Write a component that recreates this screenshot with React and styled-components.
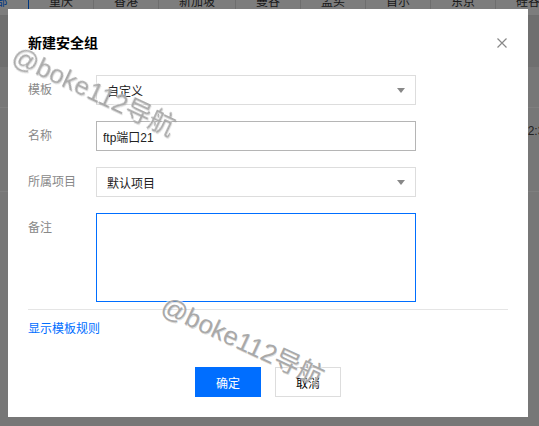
import React from 'react';
import styled, { createGlobalStyle } from 'styled-components';

const GlobalStyle = createGlobalStyle`
  html, body {
    margin: 0;
    padding: 0;
  }

  body {
    width: 539px;
    height: 426px;
    overflow: hidden;
    font-family: "Liberation Sans", "Noto Sans CJK SC", sans-serif;
    font-size: 12px;
    background: #eeeeee;
  }
`;

const Page = styled.div`
  height: 426px;
  overflow: hidden;
  background: #eeeeee;
`;

const RegionTabs = styled.div`
  display: flex;
  height: 26px;
  margin: -10px 0 0 -37px;
  background: #fafafa;
  border-bottom: 1px solid #dddddd;
  box-sizing: border-box;
`;

const RegionTab = styled.div`
  flex-shrink: 0;
  width: ${p => p.$w}px;
  box-sizing: border-box;
  border-right: 1px solid ${p => (p.$active ? '#006eff' : '#dddddd')};
  line-height: 25px;
  text-align: center;
  color: ${p => (p.$active ? '#006eff' : '#333333')};
  white-space: nowrap;
`;

const Toolbar = styled.div`
  height: 51px;
  background: #dedede;
`;

const TableRow = styled.div`
  display: flex;
  height: ${p => p.$h}px;
  border-bottom: 1px solid #ffffff;
`;

const Cell = styled.div`
  flex-shrink: 0;
  width: ${p => p.$w || 120}px;
  padding-top: 14px;
  line-height: 18px;
  color: #444444;
  white-space: nowrap;
`;

const Mask = styled.div`
  position: fixed;
  inset: 0;
  padding: 9px 0 0 8px;
  box-sizing: border-box;
  background: rgba(0, 0, 0, 0.5);
`;

const Dialog = styled.div`
  position: relative;
  display: flex;
  flex-direction: column;
  width: 520px;
  height: 408px;
  padding: 0 20px;
  box-sizing: border-box;
  background: #ffffff;
`;

const Title = styled.h3`
  margin: 0;
  padding-top: 24px;
  font-size: 14px;
  line-height: 21px;
  font-weight: bold;
  color: #000000;
`;

const CloseButton = styled.button`
  position: absolute;
  top: 29px;
  right: 21px;
  width: 10px;
  height: 10px;
  padding: 0;
  border: 0;
  background: none;
  cursor: pointer;

  svg {
    display: block;
  }
`;

const Form = styled.div`
  display: flex;
  flex-direction: column;
  gap: 16px;
  margin-top: 21px;
`;

const FieldRow = styled.div`
  display: flex;
`;

const Label = styled.div`
  width: 68px;
  flex-shrink: 0;
  line-height: 30px;
  color: #888888;
`;

const Select = styled.div`
  display: flex;
  align-items: center;
  justify-content: space-between;
  width: 320px;
  height: 30px;
  padding: 0 10px;
  box-sizing: border-box;
  border: 1px solid #dddddd;
  color: #222222;
  cursor: pointer;
`;

const Caret = styled.span`
  width: 0;
  height: 0;
  border-left: 4px solid transparent;
  border-right: 4px solid transparent;
  border-top: 5px solid #888888;
`;

const TextInput = styled.input`
  width: 320px;
  height: 30px;
  padding: 0 6px;
  box-sizing: border-box;
  border: 1px solid #b5b5b5;
  outline: none;
  font: inherit;
  font-size: 12px;
  color: #222222;
`;

const TextArea = styled.textarea`
  width: 320px;
  height: 89px;
  padding: 6px;
  box-sizing: border-box;
  border: 1px solid #006eff;
  outline: none;
  resize: none;
  font: inherit;
  font-size: 12px;
`;

const Divider = styled.div`
  height: 1px;
  margin-top: 7px;
  background: #e5e5e5;
`;

const RuleLink = styled.a`
  align-self: flex-start;
  margin-top: 10px;
  line-height: 18px;
  color: #006eff;
  text-decoration: none;
`;

const Footer = styled.div`
  display: flex;
  justify-content: center;
  gap: 14px;
  margin-top: 29px;
`;

const Button = styled.button`
  width: 66px;
  height: 30px;
  padding: 0;
  box-sizing: border-box;
  border: 1px solid ${p => (p.$primary ? '#006eff' : '#dddddd')};
  background: ${p => (p.$primary ? '#006eff' : '#ffffff')};
  color: ${p => (p.$primary ? '#ffffff' : '#000000')};
  font: inherit;
  font-size: 12px;
  cursor: pointer;
`;

const Watermark = styled.div`
  position: absolute;
  left: ${p => p.$x}px;
  top: ${p => p.$y}px;
  font-family: "Liberation Sans", "Noto Sans CJK SC", sans-serif;
  font-size: 26px;
  line-height: 26px;
  color: #a9a9a9;
  text-shadow: 1px 1px 0 rgba(0, 0, 0, 0.12), -1px -1px 0 rgba(255, 255, 255, 0.6);
  white-space: nowrap;
  transform-origin: 0 50%;
  rotate: 25deg;
  pointer-events: none;
`;

const regions = [
  ['全部', 66, true],
  ['重庆', 65],
  ['香港', 65],
  ['新加坡', 77],
  ['曼谷', 65],
  ['孟买', 65],
  ['首尔', 65],
  ['东京', 65],
  ['硅谷', 65],
];

const CloseIcon = () => (
  <svg width="10" height="10" viewBox="0 0 10 10">
    <path d="M0.5 0.5 L9.5 9.5 M9.5 0.5 L0.5 9.5" stroke="#888" strokeWidth="1.2" fill="none" />
  </svg>
);

export default function App() {
  return (
    <>
      <GlobalStyle />
      <Page>
        <RegionTabs>
          {regions.map(([name, w, active]) => (
            <RegionTab key={name} $w={w} $active={active}>{name}</RegionTab>
          ))}
        </RegionTabs>
        <Toolbar />
        <TableRow $h={40} />
        <TableRow $h={83}>
          <Cell $w={521} />
          <Cell>12:30:26</Cell>
        </TableRow>
      </Page>

      <Mask>
        <Dialog>
          <Title>新建安全组</Title>
          <CloseButton aria-label="关闭">
            <CloseIcon />
          </CloseButton>

          <Form>
            <FieldRow>
              <Label>模板</Label>
              <Select>
                <span>自定义</span>
                <Caret />
              </Select>
            </FieldRow>
            <FieldRow>
              <Label>名称</Label>
              <TextInput defaultValue="ftp端口21" />
            </FieldRow>
            <FieldRow>
              <Label>所属项目</Label>
              <Select>
                <span>默认项目</span>
                <Caret />
              </Select>
            </FieldRow>
            <FieldRow>
              <Label>备注</Label>
              <TextArea />
            </FieldRow>
          </Form>

          <Divider />
          <RuleLink href="#">显示模板规则</RuleLink>

          <Footer>
            <Button $primary>确定</Button>
            <Button>取消</Button>
          </Footer>
        </Dialog>

        <Watermark $x={14} $y={41}>@boke112导航</Watermark>
        <Watermark $x={163} $y={291}>@boke112导航</Watermark>
      </Mask>
    </>
  );
}
